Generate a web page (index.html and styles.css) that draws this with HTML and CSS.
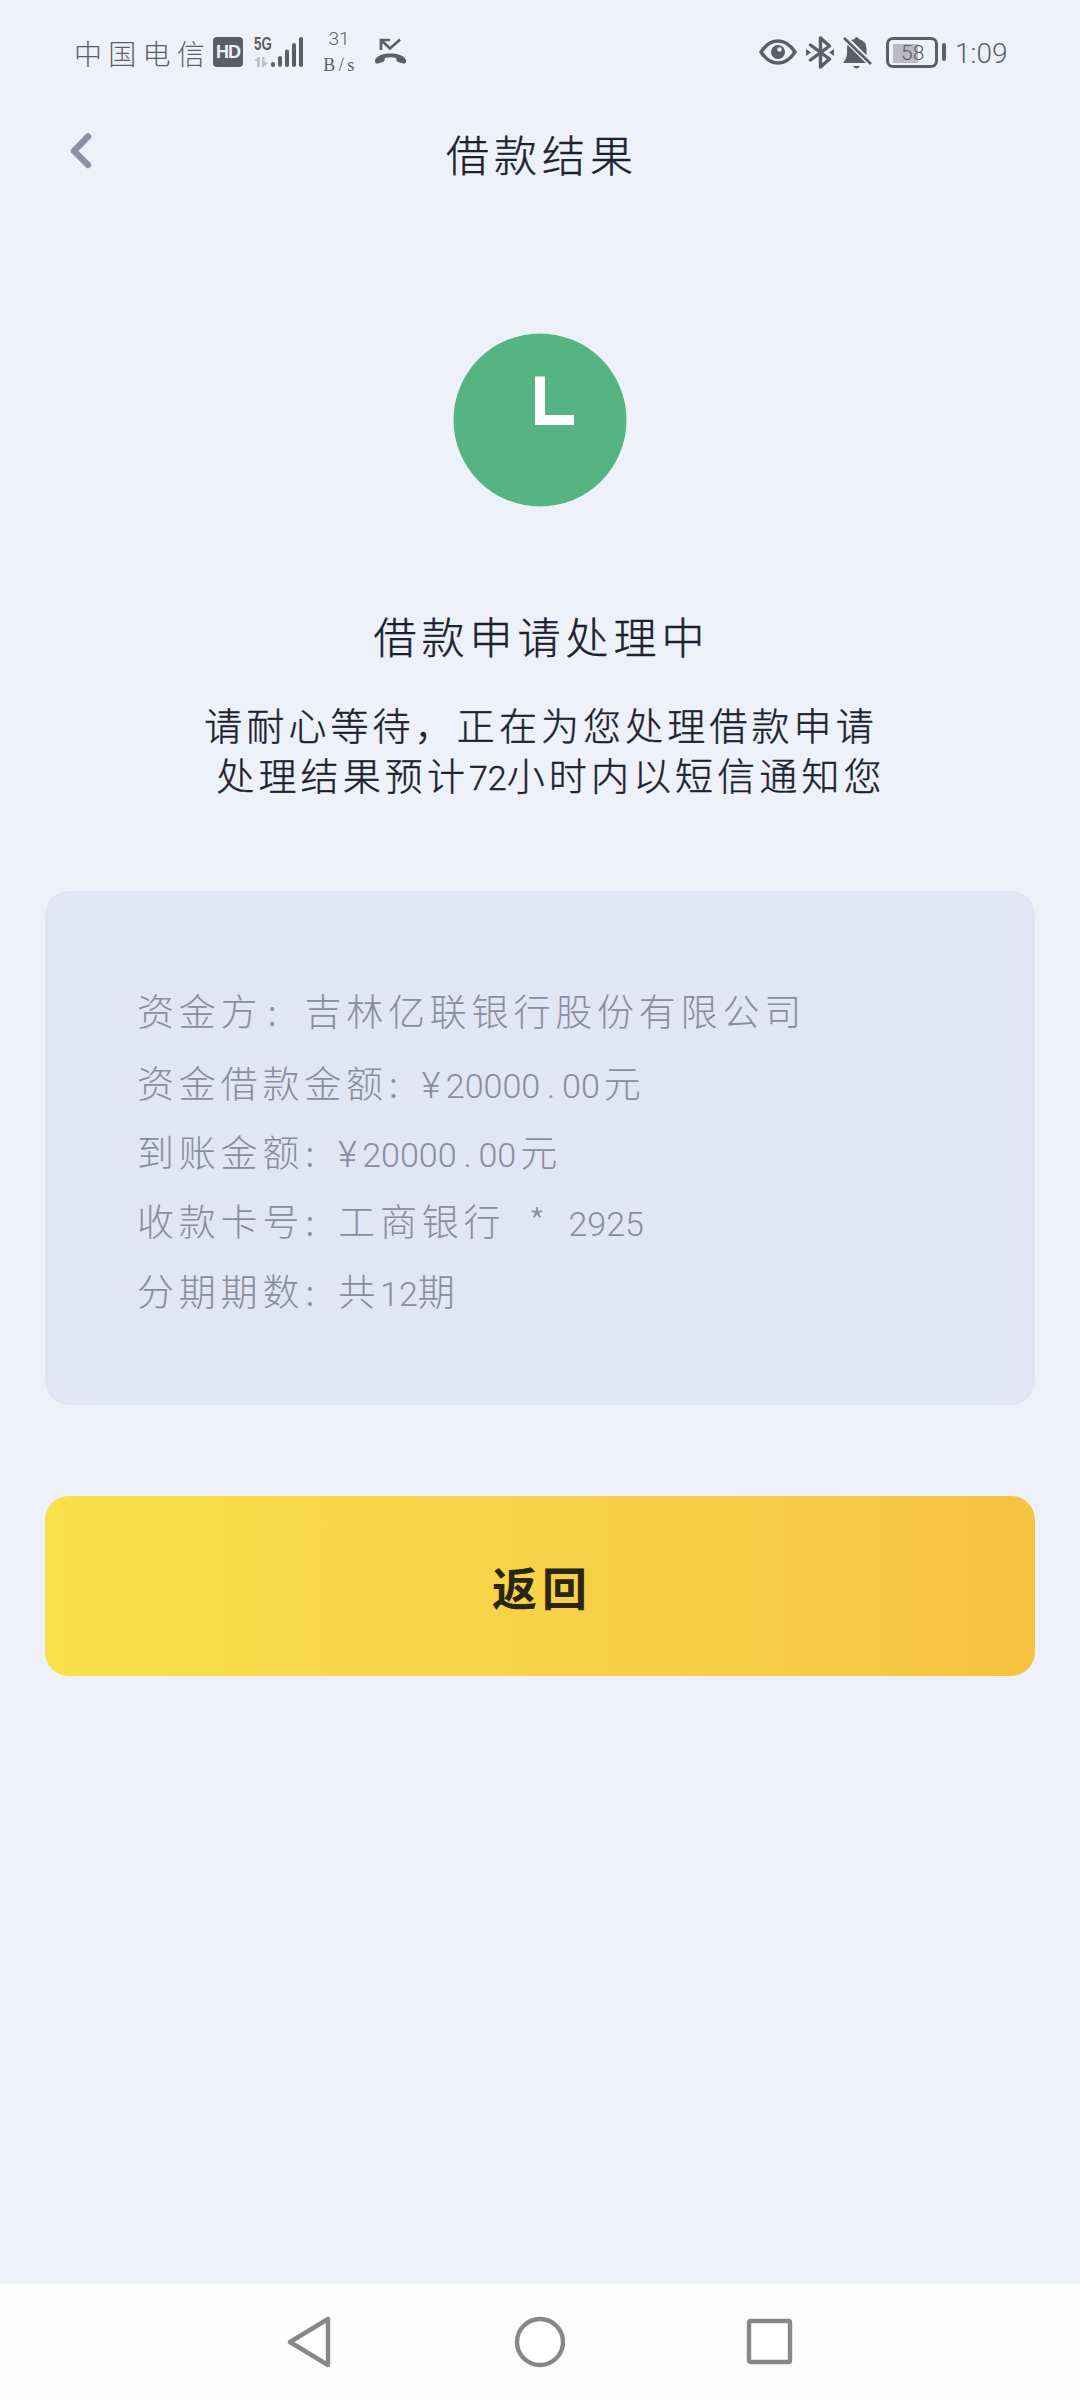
FILE: index.html
```html
<!DOCTYPE html>
<html lang="zh-CN">
<head>
<meta charset="utf-8">
<title>借款结果</title>
<link rel="stylesheet" href="styles.css">
</head>
<body>
<div class="screen">
  <header class="status">
    <div class="status-left">
      <span class="carrier">中国电信</span>
      <span class="hd">HD</span>
      <div class="signal">
        <div class="net">
          <span class="net-type">5G</span>
          <svg width="14" height="11" viewBox="0 0 14 11" fill="#c3c4cb"><path d="M0 4 4 0H6V10H3V4ZM8 0H10.500V4.500L14 6 9.500 10H8Z"/></svg>
        </div>
        <svg width="32" height="32" viewBox="0 0 32 32" stroke="#5d5d66" stroke-width="4" stroke-linecap="round"><path d="M3 28V29M10 22V29M17 15.500V29M24 9V29M31 3V29" transform="translate(-1 0)"/></svg>
      </div>
      <div class="speed"><span class="speed-num">31</span><span class="speed-unit">B/s</span></div>
      <svg class="call" width="33" height="28" viewBox="0 0 33 28"><path d="M7 12V2H16M7 2 16 10.500 26 1.500" fill="none" stroke="#5d5d66" stroke-width="2.700"/><path d="M1 22C3 17 10 15.500 16.500 15.500S30 17 32 22C32.500 25 31 26 29 25.500L24 24C22 23 22.500 21 22 20Q16.500 18.500 11 20C10.500 21 11 23 9 24L4 25.500C2 26 .5 25 1 22Z" fill="#5d5d66"/></svg>
    </div>
    <div class="status-right">
      <svg width="38" height="26" viewBox="0 0 38 26"><path d="M2 13C8 4 13 2 19 2S30 4 36 13C30 22 25 24 19 24S8 22 2 13Z" fill="none" stroke="#5d5d66" stroke-width="3.600" stroke-linejoin="round"/><circle cx="19" cy="13" r="7" fill="#5d5d66"/><circle cx="20.500" cy="10.500" r="2.200" fill="#eef1fa"/></svg>
      <svg class="bt" width="28" height="33" viewBox="0 0 28 33"><path d="M4.500 9 23.500 23 14.500 31V2L23.500 10 4.500 24" fill="none" stroke="#5d5d66" stroke-width="3.400" stroke-linejoin="round" stroke-linecap="round"/><path d="M0 13 5 16.500 0 20ZM28 13 23 16.500 28 20Z" fill="#5d5d66"/></svg>
      <svg class="bell" width="30" height="33" viewBox="0 0 30 33"><path d="M5 8 26 27H0Q4 22 4 17V12Q4 10 5 8ZM7.500 5Q9 3.500 11.500 3Q13.500-1 16 3Q23.500 5 23.500 13V20ZM10 30H17Q13.500 35 10 30Z" fill="#5d5d66"/><path d="M2 2 28 28" stroke="#eef1fa" stroke-width="6"/><path d="M1 2 28 28" stroke="#5d5d66" stroke-width="2.600"/></svg>
      <div class="battery"><span class="battery-level">58</span></div>
      <span class="battery-tip"></span>
      <span class="clock">1:09</span>
    </div>
  </header>

  <nav class="titlebar">
    <svg class="back" width="24" height="38" viewBox="0 0 24 38"><path d="M19 4.500 5 19 19 33" fill="none" stroke="#8f90a4" stroke-width="6.500" stroke-linecap="round" stroke-linejoin="round"/></svg>
    <h1 class="title">借款结果</h1>
  </nav>

  <main class="content">
    <svg class="pending" width="174" height="174" viewBox="0 0 174 174"><circle cx="87" cy="87" r="86.500" fill="#54b583"/><path d="M87 43.500V87H121" fill="none" stroke="#fff" stroke-width="10"/></svg>
    <h2 class="heading">借款申请处理中</h2>
    <p class="hint">请耐心等待，正在为您处理借款申请</p>
    <p class="hint hint-second">处理结果预计<span class="num">72</span>小时内以短信通知您</p>

    <section class="card">
      <p class="row row-first">资金方<span class="colon colon-wide">:</span>吉林亿联银行股份有限公司</p>
      <p class="row">资金借款金额<span class="colon">:</span><span class="num"><span class="yen">¥</span>20000<span class="dot">.</span>00</span><span class="unit">元</span></p>
      <p class="row">到账金额<span class="colon">:</span><span class="num"><span class="yen">¥</span>20000<span class="dot">.</span>00</span><span class="unit">元</span></p>
      <p class="row">收款卡号<span class="colon">:</span>工商银行<span class="star">*</span><span class="num">2925</span></p>
      <p class="row">分期期数<span class="colon">:</span>共<span class="num">12</span>期</p>
    </section>

    <button class="button">返回</button>
  </main>

  <footer class="navbar">
    <svg width="46" height="52" viewBox="0 0 46 52"><path d="M4 26 42 3V49Z"/></svg>
    <svg width="52" height="52" viewBox="0 0 52 52"><circle cx="27" cy="26" r="23"/></svg>
    <svg width="48" height="52" viewBox="0 0 48 52"><rect x="3" y="5" width="41" height="41" rx="1.500"/></svg>
  </footer>
</div>
</body>
</html>
```
FILE: styles.css
```css
* { box-sizing: border-box; margin: 0; padding: 0; }

body {
  background: #eef1fa;
  font-family: "Noto Sans CJK SC", "Noto Sans", sans-serif;
  font-weight: 300;
  color: #1d212e;
}

svg { display: block; flex: none; }

.screen {
  width: 1080px;
  height: 2400px;
  display: flex;
  flex-direction: column;
  overflow: hidden;
}

.status {
  height: 104px;
  padding: 0 63px 0 74px;
  display: flex;
  justify-content: space-between;
  color: #5d5d66;
}

.status-left,
.status-right { display: flex; height: 104px; align-items: center; }

.carrier {
  width: 139px;
  font-size: 28px;
  letter-spacing: 6.300px;
  line-height: 40px;
  white-space: nowrap;
  padding-top: 2px;
}

.hd {
  width: 30px;
  height: 30px;
  border-radius: 4px;
  background: #5d5d66;
  color: #eef1fa;
  font: bold 18px/31px "Liberation Sans", Arial, sans-serif;
  letter-spacing: -1px;
  text-align: center;
}

.signal { display: flex; align-items: flex-start; margin-left: 11px; height: 34px; padding-top: 1px; }
.net { width: 17px; display: flex; flex-direction: column; gap: 6px; padding-top: 1px; }
.net-type {
  height: 14px;
  font: bold 19px/14px "Liberation Sans", Arial, sans-serif;
  transform: scaleX(.7);
  transform-origin: left;
}

.speed {
  width: 44px;
  margin-left: 14px;
  display: flex;
  flex-direction: column;
  align-items: center;
}
.speed-num { font: 300 19px/26px Roboto, sans-serif; }
.speed-unit { font: 18px/26px "Liberation Serif", serif; letter-spacing: 3.500px; padding-left: 3px; }
.call { margin-left: 13px; }

.bt { margin-left: 9px; }
.bell { margin-left: 9px; }

.battery {
  width: 52px;
  height: 31px;
  margin-left: 13px;
  padding: 4px;
  border: 3px solid #5d5d66;
  border-radius: 7px;
}
.battery-level {
  display: block;
  height: 19px;
  padding-left: 8px;
  background: linear-gradient(90deg, #b9bac3 25px, transparent 25px);
  font: 300 21px/19px Roboto, sans-serif;
}
.battery-tip { width: 4px; height: 18px; margin-left: 4px; border-radius: 2px; background: #5d5d66; }
.clock { width: 62px; margin-left: 9px; padding-top: 4px; font: 300 28px/40px Roboto, sans-serif; white-space: nowrap; }

.titlebar {
  height: 96px;
  padding: 0 69px;
  display: grid;
  grid-template-columns: 100px 1fr 100px;
}
.back { margin-top: 28px; }
.title { margin-top: 17px; padding-left: 4px; text-align: center; font-size: 43px; line-height: 64px; letter-spacing: 5px; }

.title,
.heading { font-weight: 300; }
.title,
.heading,
.hint { -webkit-text-stroke: .4px currentColor; }

.content { flex: 1; padding: 133px 45px 0; display: flex; flex-direction: column; align-items: center; }
.heading { margin-top: 96px; padding-left: 3px; font-size: 43px; line-height: 64px; letter-spacing: 5px; }

.hint { height: 50px; margin-left: 2px; font-size: 38px; line-height: 50px; letter-spacing: 4.100px; white-space: nowrap; }
.heading + .hint { margin-top: 32px; }
.hint-second { margin-left: 22px; }

.num { font-family: Roboto, sans-serif; font-size: 34px; letter-spacing: 0; }

.card {
  width: 990px;
  height: 514px;
  margin-top: 92px;
  padding: 85px 92px;
  border-radius: 24px;
  background: #e2e5f3;
  color: #8a8ca0;
}
.row { height: 69.400px; font-size: 37px; line-height: 69px; letter-spacing: 4.800px; white-space: nowrap; }
.row-first { height: 71.500px; }
.colon { display: inline-block; width: 34px; padding-left: 1px; letter-spacing: 0; }
.colon-wide { width: 42px; padding-left: 5px; }
.yen { display: inline-block; width: 24px; font-size: 36px; }
.dot { display: inline-block; width: 22px; text-align: center; }
.unit { margin-left: 4px; }
.star { display: inline-block; width: 63px; text-align: center; letter-spacing: 0; line-height: 40px; }

.button {
  width: 990px;
  height: 180px;
  margin-top: 91px;
  padding: 2px 0 0 4px;
  border: 0;
  border-radius: 24px;
  background: linear-gradient(90deg, #fae04b, #f7d548 40%, #f6c343);
  color: #2b2513;
  font: 700 45px/60px "Noto Sans CJK SC", sans-serif;
  letter-spacing: 5px;
}

.navbar {
  height: 116px;
  padding: 0 286px;
  background: #fcfcfc;
  display: flex;
  align-items: center;
  justify-content: space-between;
}
.navbar svg { fill: #fff; stroke: #878787; stroke-width: 4.400; stroke-linejoin: round; }
```
